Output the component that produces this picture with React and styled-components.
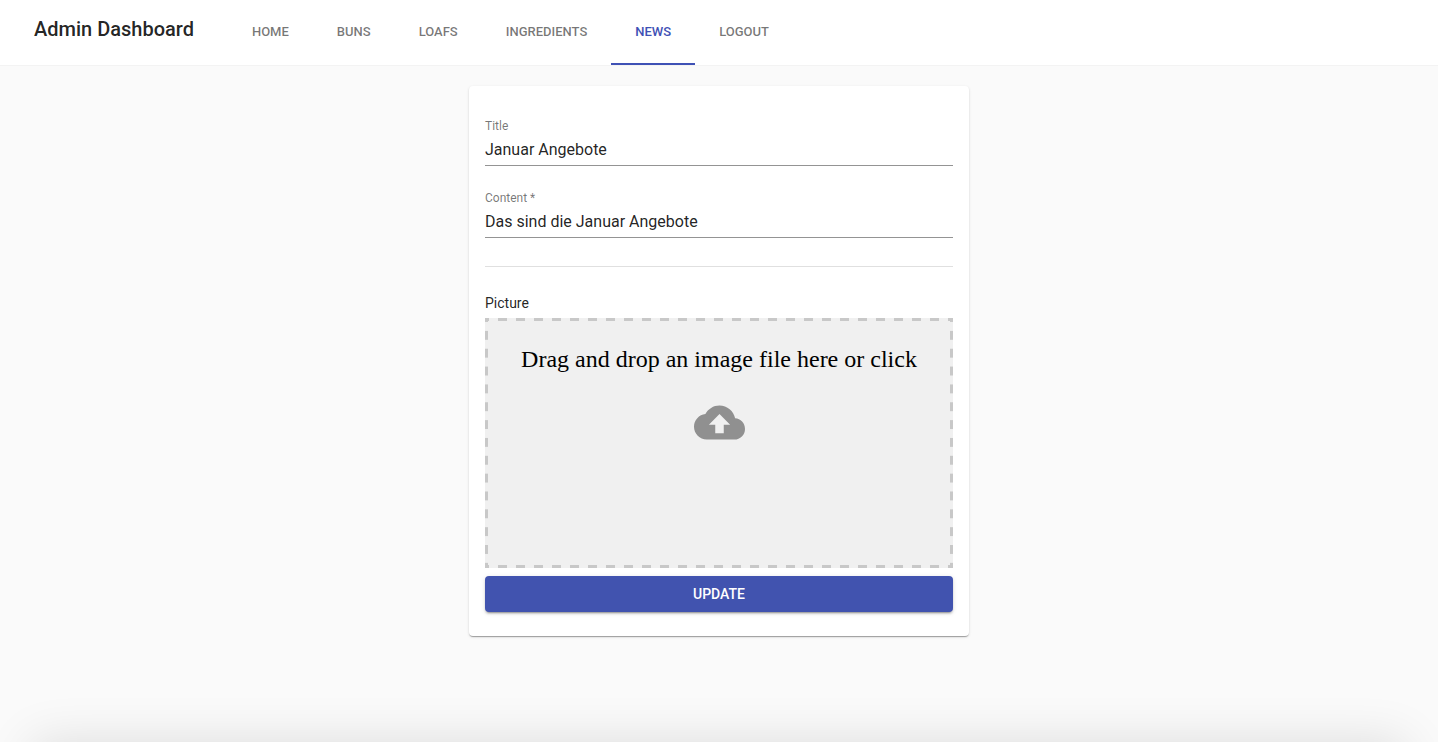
import React, { useState } from "react";
import styled, { createGlobalStyle } from "styled-components";

const GlobalStyle = createGlobalStyle`
  *, *::before, *::after { box-sizing: border-box; }
  body {
    margin: 0;
    background: #fafafa;
    color: rgba(0, 0, 0, 0.87);
    font-family: Roboto, "Liberation Sans", sans-serif;
    -webkit-font-smoothing: antialiased;
  }
`;

const Header = styled.header`
  display: flex;
  align-items: center;
  background: #fff;
  border-bottom: 1px solid #f3f3f3;
  padding: 0 34px;
`;

const Brand = styled.h1`
  margin: 0 34px 8px 0;
  font-size: 20px;
  font-weight: 500;
  line-height: 32px;
  white-space: nowrap;
`;

const Nav = styled.nav`
  display: flex;
`;

const Tab = styled.a`
  display: flex;
  align-items: center;
  height: 65px;
  padding: 0 24px;
  border-bottom: 2px solid ${(p) => (p.$active ? "#3f51b5" : "transparent")};
  color: ${(p) => (p.$active ? "#3f51b5" : "rgba(0, 0, 0, 0.54)")};
  font-size: 13px;
  font-weight: 500;
  text-decoration: none;
  text-transform: uppercase;
`;

const Main = styled.main`
  display: flex;
  justify-content: center;
  padding: 20px 16px;
`;

const Card = styled.form`
  width: 100%;
  max-width: 500px;
  padding: 16px 16px 24px;
  background: #fff;
  border-radius: 4px;
  box-shadow: 0 2px 1px -1px rgba(0, 0, 0, 0.2), 0 1px 1px 0 rgba(0, 0, 0, 0.14),
    0 1px 3px 0 rgba(0, 0, 0, 0.12);
`;

const Field = styled.div`
  display: flex;
  flex-direction: column;
  margin: 16px 0 24px;
  & + & { margin-top: 0; }
`;

const FieldLabel = styled.label`
  color: rgba(0, 0, 0, 0.54);
  font-size: 12px;
  line-height: 16px;
`;

const TextInput = styled.input`
  width: 100%;
  height: 32px;
  padding: 0;
  border: 0;
  border-bottom: 1px solid #949494;
  outline: 0;
  background: none;
  color: inherit;
  font: 16px Roboto, "Liberation Sans", sans-serif;
  &:focus { border-bottom-color: #3f51b5; }
`;

const Divider = styled.hr`
  height: 1px;
  margin: 28px 0 24px;
  border: 0;
  background: #e0e0e0;
`;

const SectionTitle = styled.h2`
  margin: 0 0 3px;
  font-size: 14px;
  font-weight: 400;
  line-height: 24px;
`;

const dash = (angle) =>
  `linear-gradient(${angle}, #c8c8c8 25%, transparent 25% 75%, #c8c8c8 75%)`;

/* The dashed frame is drawn with gradients so dash and gap are equally long. */
const DropZone = styled.label`
  position: relative;
  display: flex;
  flex-direction: column;
  align-items: center;
  gap: 24px;
  min-height: 250px;
  padding: 27px 3px 3px;
  background-color: #f0f0f0;
  background-image: ${dash("90deg")}, ${dash("90deg")}, ${dash("180deg")}, ${dash("180deg")};
  background-size: 18px 3px, 18px 3px, 3px 18px, 3px 18px;
  background-position: left top, left bottom, left top, right top;
  background-repeat: round no-repeat, round no-repeat, no-repeat round, no-repeat round;
  color: #000;
  font: 24px/28px "Liberation Serif", serif;
  text-align: center;
  cursor: pointer;
`;

const FileInput = styled.input`
  position: absolute;
  inset: 0;
  opacity: 0;
  cursor: pointer;
`;

const CloudIcon = styled.svg`
  width: 51px;
  height: 51px;
  fill: #909090;
`;

const SubmitButton = styled.button`
  display: block;
  width: 100%;
  height: 36px;
  margin-top: 8px;
  border: 0;
  border-radius: 4px;
  background: #4153af;
  color: #fff;
  font: 500 14px Roboto, "Liberation Sans", sans-serif;
  text-transform: uppercase;
  cursor: pointer;
  box-shadow: 0 3px 1px -2px rgba(0, 0, 0, 0.2), 0 2px 2px 0 rgba(0, 0, 0, 0.14),
    0 1px 5px 0 rgba(0, 0, 0, 0.12);
`;

const BottomShade = styled.div`
  position: fixed;
  top: 100%;
  left: 32px;
  right: 32px;
  height: 80px;
  box-shadow: 0 0 50px rgba(0, 0, 0, 0.12);
  pointer-events: none;
`;

const TABS = ["Home", "Buns", "Loafs", "Ingredients", "News", "Logout"];

export default function App() {
  const [title, setTitle] = useState("Januar Angebote");
  const [content, setContent] = useState("Das sind die Januar Angebote");

  return (
    <>
      <GlobalStyle />
      <Header>
        <Brand>Admin Dashboard</Brand>
        <Nav>
          {TABS.map((name) => (
            <Tab
              key={name}
              href={`#${name.toLowerCase()}`}
              $active={name === "News"}
              aria-current={name === "News" ? "page" : undefined}
            >
              {name}
            </Tab>
          ))}
        </Nav>
      </Header>
      <Main>
        <Card onSubmit={(e) => e.preventDefault()}>
          <Field>
            <FieldLabel htmlFor="title">Title</FieldLabel>
            <TextInput id="title" value={title} onChange={(e) => setTitle(e.target.value)} />
          </Field>
          <Field>
            <FieldLabel htmlFor="content">Content *</FieldLabel>
            <TextInput
              id="content"
              required
              value={content}
              onChange={(e) => setContent(e.target.value)}
            />
          </Field>
          <Divider />
          <SectionTitle>Picture</SectionTitle>
          <DropZone>
            Drag and drop an image file here or click
            <CloudIcon viewBox="0 0 24 24" aria-hidden="true">
              <path d="M19.35 10.04C18.67 6.59 15.64 4 12 4 9.11 4 6.6 5.64 5.36 8.04 2.35 8.36 0 10.91 0 14c0 3.31 2.69 6 6 6h13c2.76 0 5-2.24 5-5 0-2.64-2.05-4.78-4.65-4.96zM14 13v4h-4v-4H7l5-5 5 5h-3z" />
            </CloudIcon>
            <FileInput type="file" accept="image/*" />
          </DropZone>
          <SubmitButton type="submit">Update</SubmitButton>
        </Card>
      </Main>
      <BottomShade />
    </>
  );
}
